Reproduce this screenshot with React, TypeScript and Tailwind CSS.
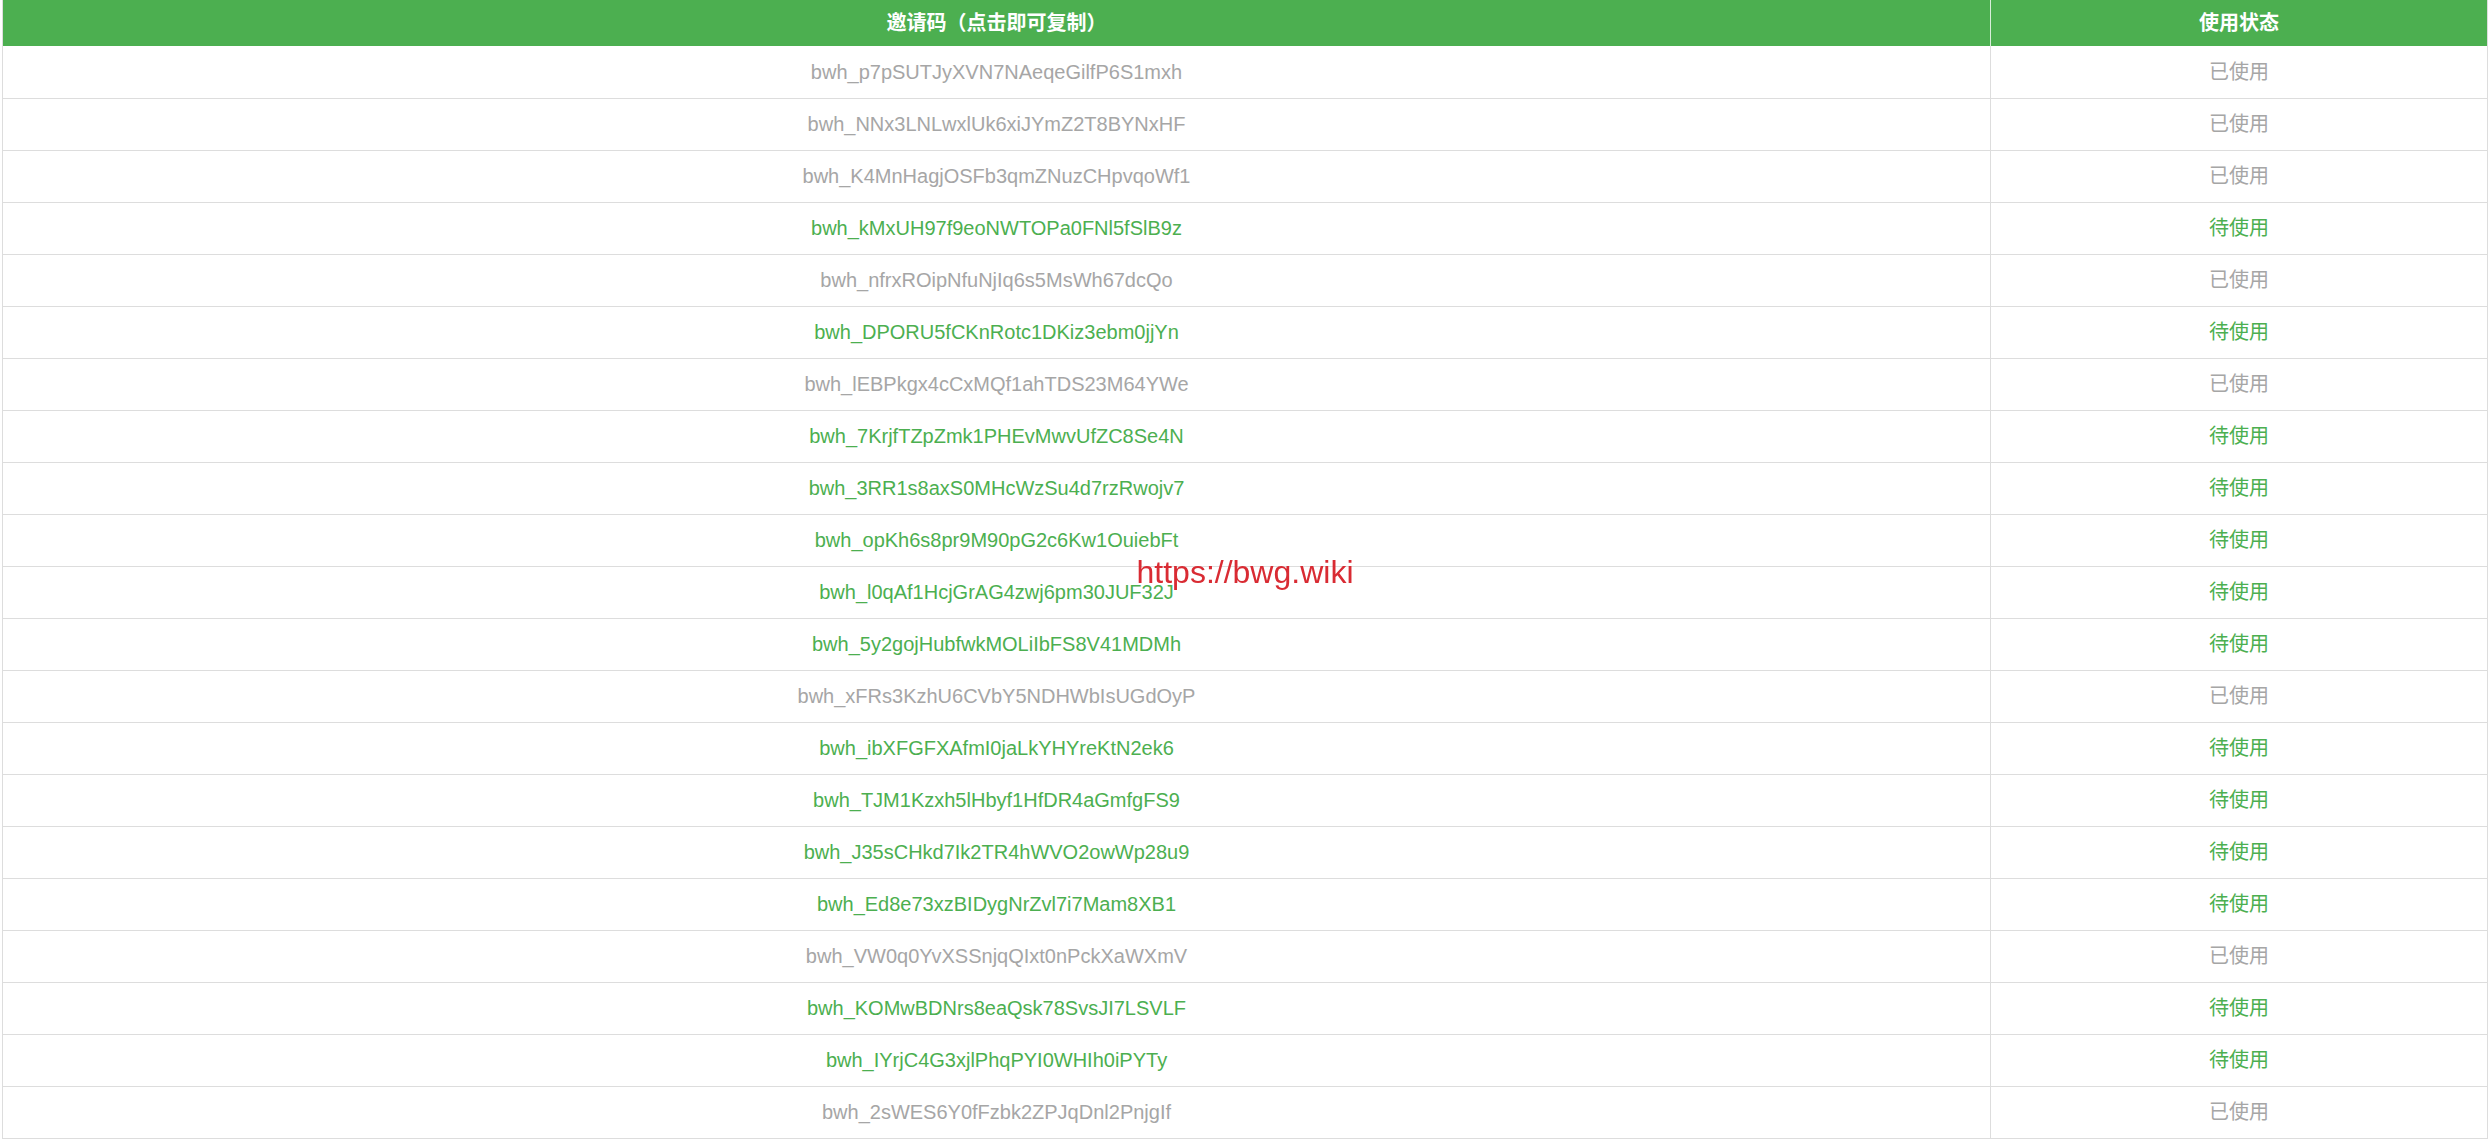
import React from 'react';

type Code = { code: string; used: boolean };

const codes: Code[] = [
  { code: 'bwh_p7pSUTJyXVN7NAeqeGilfP6S1mxh', used: true },
  { code: 'bwh_NNx3LNLwxlUk6xiJYmZ2T8BYNxHF', used: true },
  { code: 'bwh_K4MnHagjOSFb3qmZNuzCHpvqoWf1', used: true },
  { code: 'bwh_kMxUH97f9eoNWTOPa0FNl5fSlB9z', used: false },
  { code: 'bwh_nfrxROipNfuNjIq6s5MsWh67dcQo', used: true },
  { code: 'bwh_DPORU5fCKnRotc1DKiz3ebm0jjYn', used: false },
  { code: 'bwh_lEBPkgx4cCxMQf1ahTDS23M64YWe', used: true },
  { code: 'bwh_7KrjfTZpZmk1PHEvMwvUfZC8Se4N', used: false },
  { code: 'bwh_3RR1s8axS0MHcWzSu4d7rzRwojv7', used: false },
  { code: 'bwh_opKh6s8pr9M90pG2c6Kw1OuiebFt', used: false },
  { code: 'bwh_l0qAf1HcjGrAG4zwj6pm30JUF32J', used: false },
  { code: 'bwh_5y2gojHubfwkMOLiIbFS8V41MDMh', used: false },
  { code: 'bwh_xFRs3KzhU6CVbY5NDHWbIsUGdOyP', used: true },
  { code: 'bwh_ibXFGFXAfmI0jaLkYHYreKtN2ek6', used: false },
  { code: 'bwh_TJM1Kzxh5lHbyf1HfDR4aGmfgFS9', used: false },
  { code: 'bwh_J35sCHkd7Ik2TR4hWVO2owWp28u9', used: false },
  { code: 'bwh_Ed8e73xzBIDygNrZvl7i7Mam8XB1', used: false },
  { code: 'bwh_VW0q0YvXSSnjqQIxt0nPckXaWXmV', used: true },
  { code: 'bwh_KOMwBDNrs8eaQsk78SvsJI7LSVLF', used: false },
  { code: 'bwh_IYrjC4G3xjlPhqPYI0WHIh0iPYTy', used: false },
  { code: 'bwh_2sWES6Y0fFzbk2ZPJqDnl2PnjgIf', used: true },
];

const App = () => {
  return (
    <div className="min-h-screen bg-white px-[2px] font-['Liberation_Sans','Noto_Sans_CJK_SC',sans-serif]">
      {/* Invite code table */}
      <table className="w-full table-fixed border-collapse border-x border-[#ddd] text-[20px]">
        <thead>
          <tr className="h-[46px] bg-[#4caf50] text-white">
            <th className="w-[80%] border-r border-[#d8eed9] font-bold">邀请码（点击即可复制）</th>
            <th className="w-[20%] font-bold">使用状态</th>
          </tr>
        </thead>
        <tbody>
          {codes.map((item) => (
            <tr
              key={item.code}
              className={`h-[52px] border-b border-[#ddd] ${item.used ? 'text-[#a6a6a6]' : 'text-[#4caf50]'}`}
            >
              <td className="border-r border-[#ddd] text-center cursor-pointer">{item.code}</td>
              <td className="text-center">{item.used ? '已使用' : '待使用'}</td>
            </tr>
          ))}
        </tbody>
      </table>

      {/* Watermark */}
      <div className="pointer-events-none fixed inset-0 flex items-center justify-center">
        <span className="text-[32px] leading-none text-[#d92b33]">https://bwg.wiki</span>
      </div>
    </div>
  );
};

export default App;
